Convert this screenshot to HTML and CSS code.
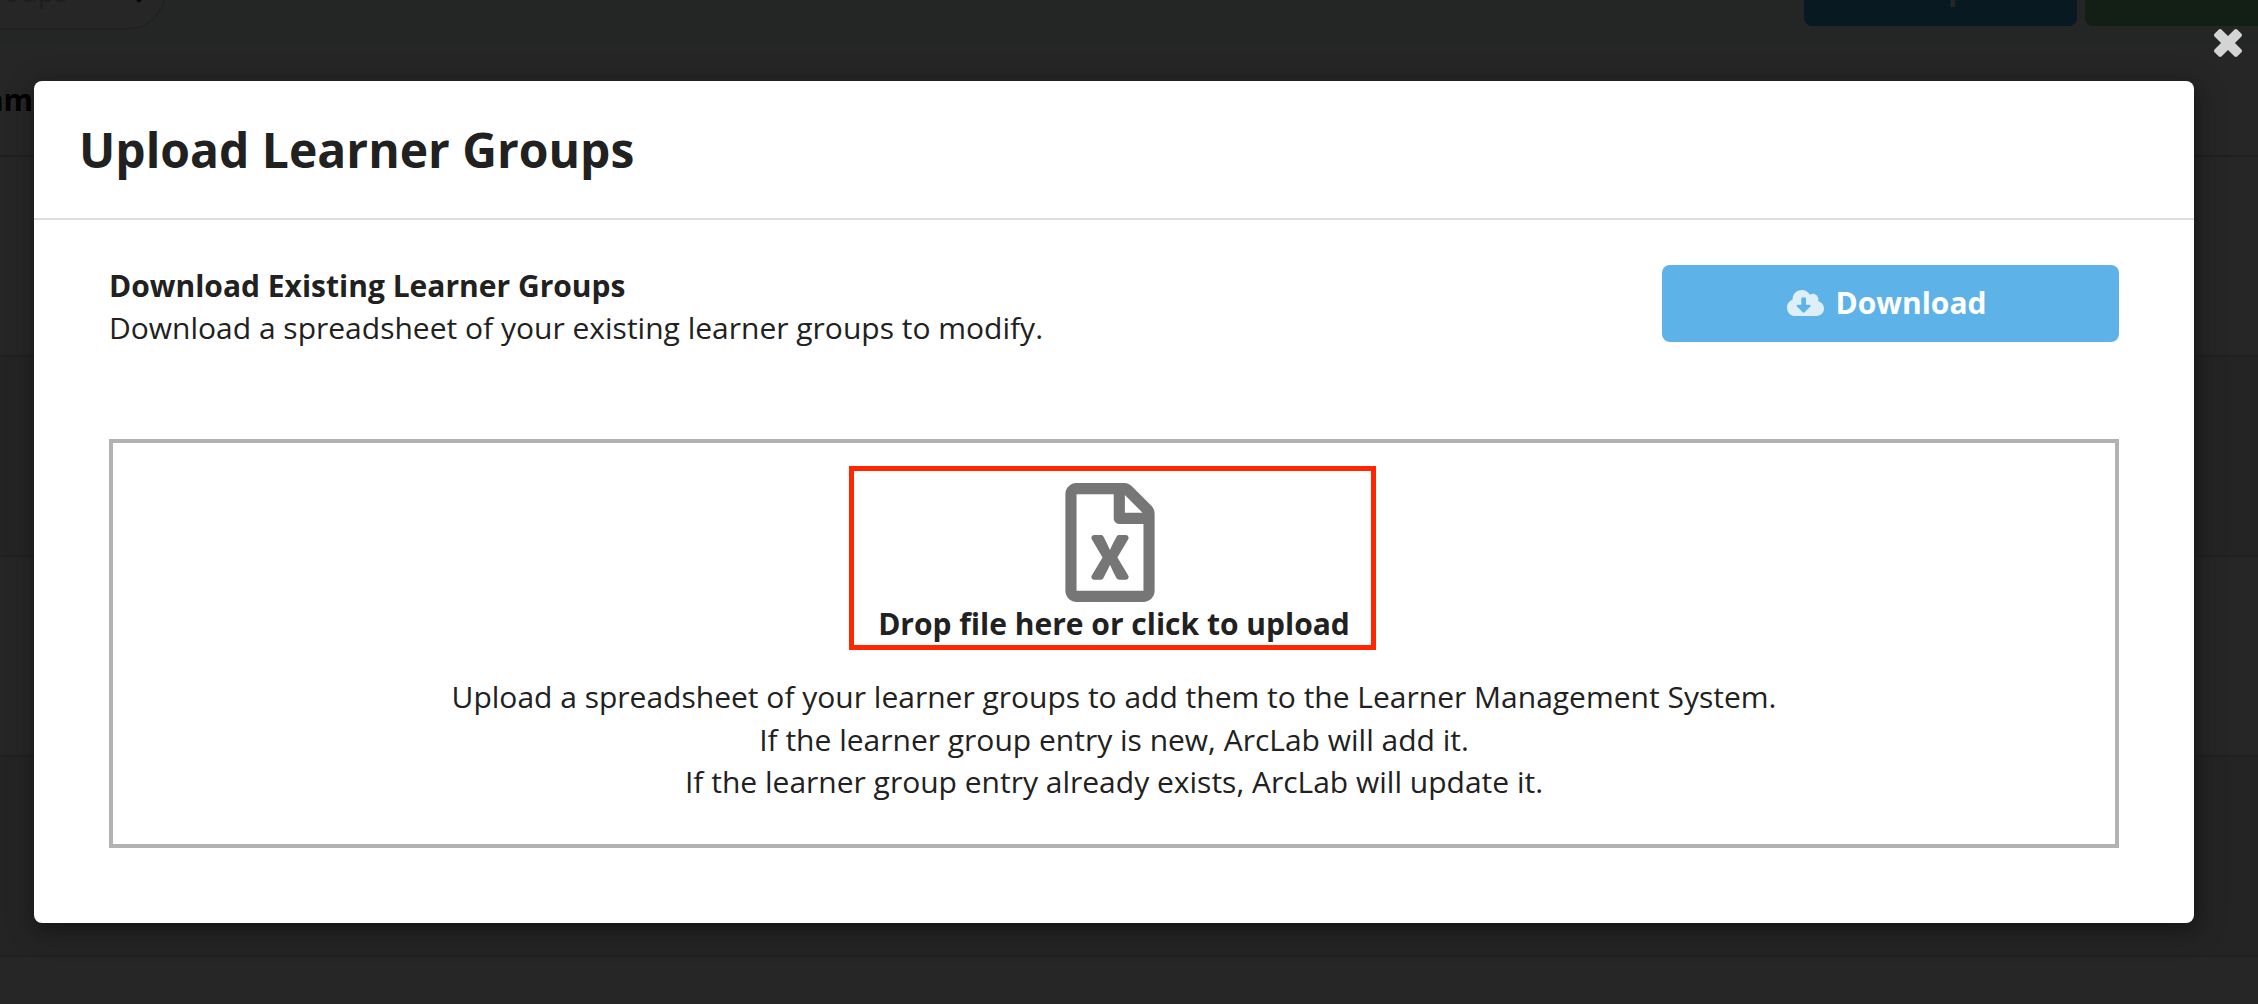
FILE: index.html
```html
<!DOCTYPE html>
<html lang="en">
<head>
  <meta charset="utf-8">
  <title>Upload Learner Groups</title>
  <link rel="stylesheet" href="styles.css">
</head>
<body>
  <div class="page">
    <div class="toolbar">
      <div class="search">
        <span class="search-text">Groups</span>
        <svg class="search-icon" viewBox="0 0 512 512"><path d="M505 442.700L405.300 343c28.300-34.900 44.700-79 44.700-127C450 103.500 342.500 0 225 0S0 93.100 0 208s93.100 208 208 208c48.300 0 92.700-16.400 128-44l99.700 99.700c9.400 9.400 24.600 9.400 33.900 0l28.300-28.300c9.400-9.400 9.400-24.600.1-34z"/></svg>
      </div>
      <div class="actions">
        <div class="action action-upload">Upload</div>
        <div class="action action-add"></div>
      </div>
    </div>
    <div class="table">
      <div class="table-head">Name</div>
      <div class="table-row"></div>
      <div class="table-row table-row-striped"></div>
      <div class="table-row"></div>
      <div class="table-row table-row-striped"></div>
      <div class="table-row"></div>
    </div>
  </div>

  <div class="dimmer">
    <svg class="close" viewBox="0 0 28 28">
      <rect x="-2" y="9.100" width="32" height="9.800" rx="2.200" transform="rotate(45 14 14)"/>
      <rect x="-2" y="9.100" width="32" height="9.800" rx="2.200" transform="rotate(-45 14 14)"/>
    </svg>
    <div class="modal">
      <div class="header">Upload Learner Groups</div>
      <div class="content">
        <div class="download">
          <div class="download-text">
            <b>Download Existing Learner Groups</b><br>
            Download a spreadsheet of your existing learner groups to modify.
          </div>
          <div class="button">
            <svg class="cloud" viewBox="0 0 640 448"><path d="M537.600 194.600c4-10.700 6.400-22.400 6.400-34.600 0-53-43-96-96-96-19.700 0-38.100 6-53.300 16.200C367 32.200 315.300 0 256 0 167.600 0 96 71.600 96 160c0 2.700.1 5.400.2 8.100C40.200 187.800 0 241.200 0 304c0 79.500 64.500 144 144 144h368c70.700 0 128-57.300 128-128 0-61.900-44-113.600-102.400-125.400zm-132.900 88.700L299.300 388.700c-6.200 6.200-16.400 6.200-22.600 0L171.300 283.300c-10.100-10.100-2.900-27.300 11.300-27.300H248V144c0-8.800 7.200-16 16-16h48c8.800 0 16 7.200 16 16v112h65.400c14.200 0 21.400 17.200 11.300 27.300z"/></svg>
            Download
          </div>
        </div>
        <div class="dropzone">
          <div class="drop-target">
            <svg class="file" viewBox="0 0 384 512"><path d="M369.900 97.900L286 14C277 5 264.800-.1 252.100-.1H48C21.500 0 0 21.500 0 48v416c0 26.500 21.500 48 48 48h288c26.500 0 48-21.500 48-48V131.900c0-12.700-5.100-25-14.100-34zM332.100 128H256V51.900l76.100 76.100zM48 464V48h160v104c0 13.300 10.700 24 24 24h104v288H48zm212-240h-28.800c-4.400 0-8.400 2.400-10.500 6.300-18 33.100-22.200 42.400-28.600 57.700-13.900-29.100-6.900-17.300-28.600-57.700-2.100-3.900-6.200-6.300-10.600-6.300H124c-9.300 0-15 10-10.400 18l46.300 78-46.300 78c-4.700 8 1.100 18 10.400 18h28.900c4.400 0 8.400-2.400 10.500-6.300 21.700-40 23-45 28.600-57.700 14.900 30.200 5.900 15.900 28.600 57.700 2.100 3.900 6.200 6.300 10.600 6.300H260c9.300 0 15-10 10.400-18L224 320c.7-1.100 30.300-50.500 46.300-78 4.700-8-1.100-18-10.300-18z"/></svg>
            <b>Drop file here or click to upload</b>
          </div>
          <p class="help">
            Upload a spreadsheet of your learner groups to add them to the Learner Management System.<br>
            If the learner group entry is new, ArcLab will add it.<br>
            If the learner group entry already exists, ArcLab will update it.
          </p>
        </div>
      </div>
    </div>
  </div>
</body>
</html>
```

FILE: styles.css
```css
* {
  box-sizing: border-box;
}
body {
  margin: 0;
  height: 1004px;
  overflow: hidden;
  font-family: "Open Sans", sans-serif;
  font-size: 30px;
  line-height: 43px;
  color: #212121;
}
.page {
  height: 1004px;
  overflow: hidden;
  background: #fff;
}
.toolbar {
  display: flex;
  justify-content: space-between;
  align-items: flex-end;
  height: 45px;
  background: #eefcf3;
}
.search {
  display: flex;
  align-items: flex-end;
  width: 166px;
  height: 76px;
  margin-bottom: 15px;
  padding: 0 22px 17px 0;
  border: 2px solid #dedede;
  border-left: 0;
  border-radius: 0 38px 38px 0;
  background: #fff;
  color: #c8c8c8;
}
.search-text {
  flex: 1;
  margin-left: -28px;
  font-size: 28px;
  line-height: 40px;
}
.search-icon {
  width: 26px;
  height: 26px;
  margin-bottom: 7px;
}
.actions {
  display: flex;
  gap: 8px;
  margin-bottom: 19px;
}
.action {
  width: 273px;
  height: 77px;
  padding: 18px 0 0 76px;
  border-radius: 8px;
  color: #fff;
  font-weight: 700;
  text-align: center;
}
.action-upload {
  background: #35a7e3;
}
.action-add {
  width: 173px;
  border-radius: 8px 0 0 8px;
  background: #7fcf8c;
}
.table-head {
  height: 112px;
  margin-left: -39px;
  padding-top: 33px;
  border-bottom: 2px solid #d4d4d5;
  color: #000;
  font-weight: 700;
}
.table-row {
  height: 200px;
  border-bottom: 2px solid #dcdcdc;
}
.table-row-striped {
  background: #f2f2f2;
}
.dimmer {
  position: absolute;
  top: 0;
  left: 0;
  width: 2258px;
  height: 1004px;
  padding: 81px 64px 81px 34px;
  background: rgba(0, 0, 0, 0.85);
}
.close {
  position: absolute;
  top: 29px;
  right: 16px;
  width: 28px;
  height: 28px;
  fill: #d4d4d4;
}
.modal {
  height: 842px;
  border-radius: 8px;
  background: #fff;
  box-shadow: 2px 6px 14px rgba(0, 0, 0, 0.2), 2px 6px 30px 4px rgba(0, 0, 0, 0.2);
}
.header {
  height: 139px;
  padding: 37px 45px;
  border-bottom: 2px solid #dedede;
  font-size: 48px;
  font-weight: 700;
  line-height: 64px;
}
.content {
  padding: 45px 75px;
}
.download {
  display: flex;
  justify-content: space-between;
  height: 174px;
}
.download-text {
  line-height: 42px;
}
.button {
  display: flex;
  justify-content: center;
  align-items: center;
  gap: 11px;
  width: 457px;
  height: 77px;
  padding: 0 7px 2px 0;
  border-radius: 8px;
  background: #5db3e7;
  color: #fff;
  font-weight: 700;
}
.cloud {
  width: 37px;
  height: 26px;
  fill: #dfeff9;
}
.dropzone {
  display: flex;
  flex-direction: column;
  align-items: center;
  height: 409px;
  padding: 23px 0;
  border: 4px solid #b2b2b2;
}
.drop-target {
  display: flex;
  flex-direction: column;
  align-items: center;
  width: 527px;
  height: 184px;
  margin-right: 4px;
  padding: 12px 0 0 4px;
  border: 5px solid #ff2600;
}
.file {
  width: 90px;
  height: 120px;
  margin-right: 8px;
  fill: #767676;
}
.help {
  margin: 26px 0 0;
  line-height: 42.500px;
  text-align: center;
}
```
